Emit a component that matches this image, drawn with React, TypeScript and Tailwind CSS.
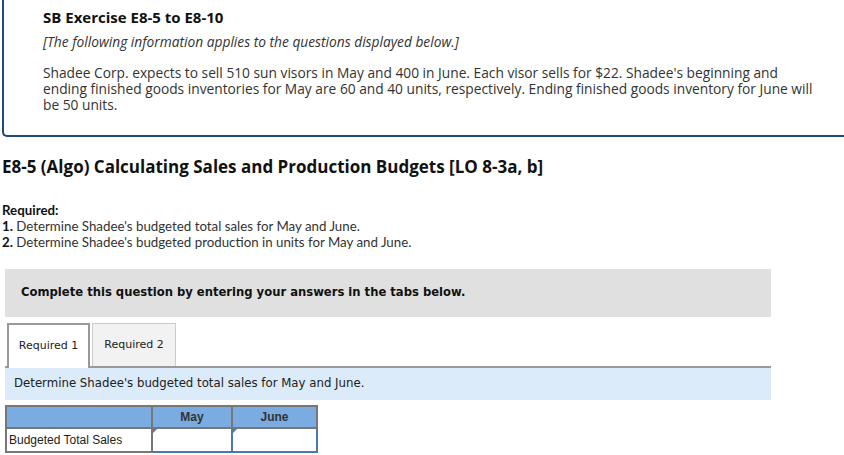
import React from "react";

const body = { fontFamily: "'Open Sans', Lato, sans-serif" };
const lato = { fontFamily: "Lato, 'Open Sans', sans-serif" };
const tahoma = { fontFamily: "'DejaVu Sans', Verdana, sans-serif" };
const arial = { fontFamily: "'Liberation Sans', Arial, sans-serif" };

function AnswerCell() {
  return (
    <td className="relative border-2 border-[#4a78b5] bg-white p-0">
      {/* small corner marker */}
      <span className="absolute left-0 top-0 h-0 w-0 border-r-[4px] border-t-[4px] border-r-transparent border-t-[#4a78b5]" />
      <div className="h-[20px]" />
    </td>
  );
}

export default function App() {
  return (
    <div className="min-h-screen w-[844px] overflow-hidden bg-white text-[#222]">
      {/* intro panel */}
      <div className="ml-[2px] -mt-[10px] mr-[-20px] rounded-bl-[5px] border-b-2 border-l-2 border-[#1f497d] pb-[22px] pl-[39px] pt-[17px]" style={body}>
        <h2 className="text-[15px] font-bold leading-[20px] text-[#111]">SB Exercise E8-5 to E8-10</h2>
        <p className="mt-[7px] text-[13.75px] italic leading-[16px] text-[#333]">
          [The following information applies to the questions displayed below.]
        </p>
        <p className="mt-[15px] w-[780px] text-[13.75px] leading-[16px] text-[#333]">
          Shadee Corp. expects to sell 510 sun visors in May and 400 in June. Each visor sells for $22. Shadee's beginning and ending finished goods inventories for May are 60 and 40 units, respectively. Ending finished goods inventory for June will be 50 units.
        </p>
      </div>

      <div className="pl-[2px]" style={body}>
        <h1 className="mt-[18px] text-[17px] font-bold leading-[24px] text-[#111]">
          E8-5 (Algo) Calculating Sales and Production Budgets [LO 8-3a, b]
        </h1>
        <div className="mt-[23px] text-[13.3px] leading-[16px] text-[#333]" style={lato}>
          <p className="font-bold text-[#111]">Required:</p>
          <p><b className="text-[#111]">1.</b> Determine Shadee's budgeted total sales for May and June.</p>
          <p><b className="text-[#111]">2.</b> Determine Shadee's budgeted production in units for May and June.</p>
        </div>
      </div>

      <div className="ml-[5px] w-[766px]" style={tahoma}>
        <div className="mt-[19px] flex h-[48px] items-center bg-[#e0e0e0] pl-[16px]">
          <span className="text-[11.6px] font-bold text-[#111]">Complete this question by entering your answers in the tabs below.</span>
        </div>

        {/* tabs */}
        <div className="mt-[6px] flex items-end border-b-2 border-[#999] pl-[2px]">
          <div className="-mb-[2px] flex h-[45px] w-[83px] items-center justify-center border-2 border-b-0 border-[#999] bg-white text-[11px] text-[#222]">
            Required 1
          </div>
          <div className="ml-[2px] flex h-[43px] w-[84px] items-center justify-center border border-b-0 border-[#ccc] bg-[#f2f2f2] text-[11px] text-[#222]">
            Required 2
          </div>
        </div>

        <div className="flex h-[32px] items-center bg-[#dbebf9] pl-[9px] text-[11.75px] text-[#222]">
          Determine Shadee's budgeted total sales for May and June.
        </div>
      </div>

      <table className="ml-[5px] mt-[5px] border-collapse text-[12px]" style={arial}>
        <thead>
          <tr className="h-[22px] bg-[#7aace2]">
            <th className="w-[146px] border-2 border-[#777]" />
            <th className="w-[80px] border-2 border-[#777] font-bold text-[#333]">May</th>
            <th className="w-[85px] border-2 border-[#777] font-bold text-[#333]">June</th>
          </tr>
        </thead>
        <tbody>
          <tr className="h-[24px]">
            <td className="border-2 border-[#777] bg-white pl-[2px] text-[#222]">Budgeted Total Sales</td>
            <AnswerCell />
            <AnswerCell />
          </tr>
        </tbody>
      </table>
    </div>
  );
}
